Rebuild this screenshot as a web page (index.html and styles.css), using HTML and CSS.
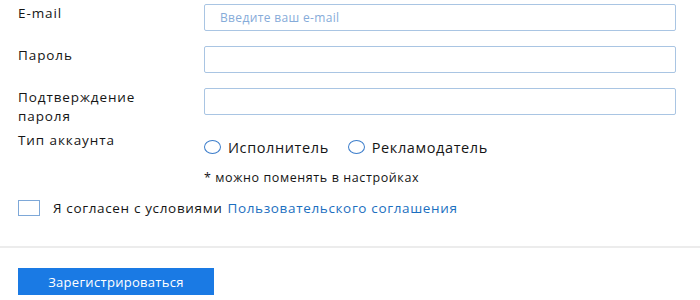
FILE: index.html
```html
<!DOCTYPE html>
<html lang="ru">
<head>
  <meta charset="UTF-8">
  <title>Регистрация</title>
  <link rel="stylesheet" href="styles.css">
</head>
<body>
  <form class="signup">
    <div class="fields">
      <label class="field-label" for="email">E-mail</label>
      <input class="field-input" type="text" id="email" placeholder="Введите ваш e-mail">

      <label class="field-label" for="password">Пароль</label>
      <input class="field-input" type="password" id="password">

      <label class="field-label two-lines" for="password2">Подтверждение<br>пароля</label>
      <input class="field-input" type="password" id="password2">

      <span class="field-label type-label">Тип аккаунта</span>
      <div class="account-type">
        <div class="radios">
          <label class="radio"><span class="radio-mark"></span>Исполнитель</label>
          <label class="radio"><span class="radio-mark"></span>Рекламодатель</label>
        </div>
        <p class="hint">* можно поменять в настройках</p>
      </div>
    </div>

    <label class="agree">
      <span class="check-mark"></span>
      Я согласен с условиями <a href="#">Пользовательского соглашения</a>
    </label>

    <div class="actions">
      <button type="submit" class="submit">Зарегистрироваться</button>
    </div>
  </form>
</body>
</html>
```

FILE: styles.css
```css
/* General */
body {
  margin: 0;
  font-family: "Open Sans", Arial, sans-serif;
  font-size: 14px;
  color: #151515;
  background: #fff;
}

.signup {
  margin: 0;
}

/* Rows */
.fields {
  display: grid;
  grid-template-columns: 186px 472px;
  row-gap: 15px;
  padding: 4px 0 0 18px;
}

.field-label {
  height: 27px;
  font-size: 13.5px;
  line-height: 16px;
  letter-spacing: 0.9px;
  padding-top: 1px;
  box-sizing: border-box;
}

.field-label.two-lines {
  line-height: 18.5px;
  margin-top: -1px;
}

.field-input {
  box-sizing: border-box;
  height: 27px;
  width: 100%;
  margin: 0;
  padding: 0 15px;
  border: 1px solid #a9c5e3;
  border-radius: 2px;
  font-family: inherit;
  font-size: 12px;
  letter-spacing: 0.35px;
  outline: none;
}

.field-input::placeholder {
  color: #86abd9;
}

.type-label {
  padding-top: 2px;
}

/* Account type */
.account-type {
  padding-top: 7px;
}

.radios {
  display: flex;
  gap: 19px;
}

.radio {
  display: flex;
  align-items: center;
  gap: 7px;
  height: 20px;
  font-size: 14.5px;
  letter-spacing: 0.6px;
}

.radio-mark {
  box-sizing: border-box;
  width: 17px;
  height: 14px;
  border: 1px solid #3d7ecb;
  border-radius: 50%;
}

.hint {
  margin: 13px 0 0;
  font-size: 12.5px;
  line-height: 16px;
  letter-spacing: 0.6px;
}

/* Agreement */
.agree {
  display: flex;
  align-items: center;
  height: 20px;
  margin: 12px 0 0 18px;
  font-size: 13.5px;
  letter-spacing: 0.65px;
}

.check-mark {
  box-sizing: border-box;
  width: 22px;
  height: 16px;
  margin-right: 13px;
  border: 1px solid #7ea8d8;
}

.agree a {
  margin-left: 5px;
  color: #1c6fc0;
  text-decoration: none;
}

/* Footer actions */
.actions {
  margin-top: 28px;
  border-top: 2px solid #ececec;
  padding: 20px 18px 0;
}

.submit {
  width: 196px;
  height: 27px;
  border: none;
  background: #1a7ae4;
  color: #fff;
  font-family: "Open Sans", Arial, sans-serif;
  font-size: 13px;
  letter-spacing: 0.3px;
  cursor: pointer;
}
```
